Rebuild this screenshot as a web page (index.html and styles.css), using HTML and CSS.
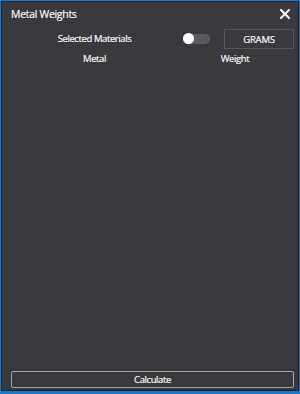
FILE: index.html
```html
<!DOCTYPE html>
<html lang="en">
<head>
  <meta charset="UTF-8">
  <link rel="stylesheet" href="styles.css">
</head>
<body>
  <div class="window">
    <div class="frame">
      <div class="titlebar">
        <span class="title">Metal Weights</span>
        <button class="close-btn" aria-label="Close">
          <svg viewBox="0 0 10 10" width="10" height="10">
            <path d="M1 1L9 9M9 1L1 9" stroke="#fff" stroke-width="2" stroke-linecap="square"/>
          </svg>
        </button>
      </div>

      <div class="controls">
        <span class="label">Selected Materials</span>
        <div class="toggle"><div class="knob"></div></div>
        <button class="unit-btn">GRAMS</button>
        <span class="label">Metal</span>
        <span class="label weight-col">Weight</span>
      </div>

      <div class="spacer"></div>

      <button class="calc-btn">Calculate</button>
    </div>
  </div>
</body>
</html>
```

FILE: styles.css
```css
:root {
  --bg: #3a393e;
  --text: #f8f8f8;
  --accent: #1479d4;
  --inner-line: #232226;
  --btn-border: #55545a;
  --track: #5b5a61;
}

body {
  margin: 0;
  font-family: 'Open Sans', 'Noto Sans', sans-serif;
  color: var(--text);
  -webkit-text-stroke: 0.2px var(--text);
}

.window {
  width: 300px;
  height: 394px;
  box-sizing: border-box;
  border: 1px solid var(--accent);
  border-bottom-width: 3px;
}

.frame {
  height: 100%;
  box-sizing: border-box;
  border: 1px solid var(--inner-line);
  background: var(--bg);
  display: flex;
  flex-direction: column;
}

.titlebar {
  display: flex;
  align-items: center;
  justify-content: space-between;
  height: 24px;
  padding: 0 6px 0 9px;
}

.title {
  font-size: 10.5px;
  letter-spacing: -0.3px;
}

.close-btn {
  background: none;
  border: none;
  padding: 0;
  width: 14px;
  height: 14px;
  display: flex;
  align-items: center;
  justify-content: center;
}

.controls {
  display: grid;
  grid-template-columns: 167px 27px 70px;
  column-gap: 5px;
  row-gap: 1px;
  align-items: center;
  padding: 3px 4px 0 9px;
  justify-content: start;
}

.controls .unit-btn {
  margin-left: 9px;
}

.label {
  font-size: 9.5px;
  letter-spacing: -0.4px;
  text-align: center;
  line-height: 18px;
}

.weight-col {
  grid-column: 2 / 4;
  padding-left: 2px;
}

.toggle {
  width: 27px;
  height: 10px;
  border-radius: 5px;
  background: var(--track);
  position: relative;
}

.knob {
  position: absolute;
  left: 0;
  top: -1px;
  width: 11px;
  height: 11px;
  border-radius: 50%;
  background: #fff;
}

.unit-btn {
  width: 70px;
  height: 20px;
  box-sizing: border-box;
  background: transparent;
  border: 1px solid var(--btn-border);
  color: var(--text);
  font-family: inherit;
  font-size: 9.5px;
  letter-spacing: -0.2px;
  padding: 0;
}

.spacer {
  flex: 1;
}

.calc-btn {
  margin: 0 4px 2px 9px;
  height: 17px;
  box-sizing: border-box;
  background: transparent;
  border: 1px solid #a3a2a6;
  border-radius: 2px;
  color: var(--text);
  font-family: inherit;
  font-size: 9.5px;
  letter-spacing: -0.4px;
  padding: 0;
}
```
